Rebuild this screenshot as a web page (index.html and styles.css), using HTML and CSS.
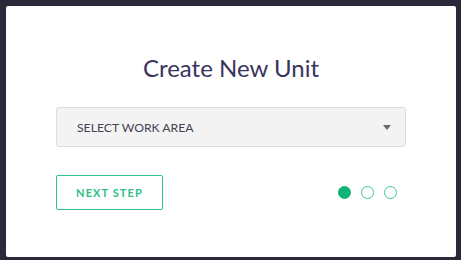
FILE: index.html
```html
<!DOCTYPE html>
<html lang="en">
<head>
    <meta charset="UTF-8">
    <meta name="viewport" content="width=device-width, initial-scale=1.0">
    <title>Create New Unit</title>
    <link rel="stylesheet" href="styles.css">
</head>
<body>

<div class="modal">
    <h2 class="modal-title">Create New Unit</h2>

    <!-- work area select -->
    <div class="select-box">
        <span class="select-label">SELECT WORK AREA</span>
        <span class="select-caret"></span>
    </div>

    <div class="modal-footer">
        <button class="next-button">NEXT STEP</button>
        <div class="steps">
            <span class="step active"></span>
            <span class="step"></span>
            <span class="step"></span>
        </div>
    </div>
</div>

</body>
</html>
```

FILE: styles.css
```css
body {
    margin: 0;
    padding: 6px 5px 3px 6px;
    background-color: #2a2839;
    font-family: Lato, "Open Sans", sans-serif;
}

.modal {
    width: 450px;
    height: 251px;
    box-sizing: border-box;
    background-color: #ffffff;
    border-radius: 2px;
    padding: 46px 50px 0 50px;
}

.modal-title {
    margin: 0;
    text-align: center;
    font-size: 24px;
    font-weight: 400;
    color: #38355e;
    line-height: 32px;
}

/* select */
.select-box {
    margin-top: 23px;
    height: 40px;
    box-sizing: border-box;
    border: 1px solid #dcdcdc;
    border-radius: 3px;
    background-color: #f3f3f3;
    display: flex;
    align-items: center;
    justify-content: space-between;
    padding: 0 14px 0 20px;
}

.select-label {
    font-size: 12.2px;
    color: #444352;
}

.select-caret {
    width: 0;
    height: 0;
    border-left: 4.5px solid transparent;
    border-right: 4.5px solid transparent;
    border-top: 5px solid #6a6975;
}

/* footer */
.modal-footer {
    margin-top: 28px;
    display: flex;
    align-items: center;
    justify-content: space-between;
}

.next-button {
    width: 107px;
    height: 35px;
    background-color: #ffffff;
    border: 1px solid #2ec48a;
    border-radius: 2px;
    color: #2ebf86;
    font-family: Lato, "Open Sans", sans-serif;
    font-size: 11px;
    font-weight: 700;
    letter-spacing: 1.1px;
    cursor: pointer;
}

.steps {
    display: flex;
    gap: 10px;
    margin-right: 9px;
}

.step {
    width: 13px;
    height: 13px;
    box-sizing: border-box;
    border-radius: 50%;
    border: 1.5px solid #3ac892;
}

.step.active {
    background-color: #12b377;
    border-color: #12b377;
}
```
